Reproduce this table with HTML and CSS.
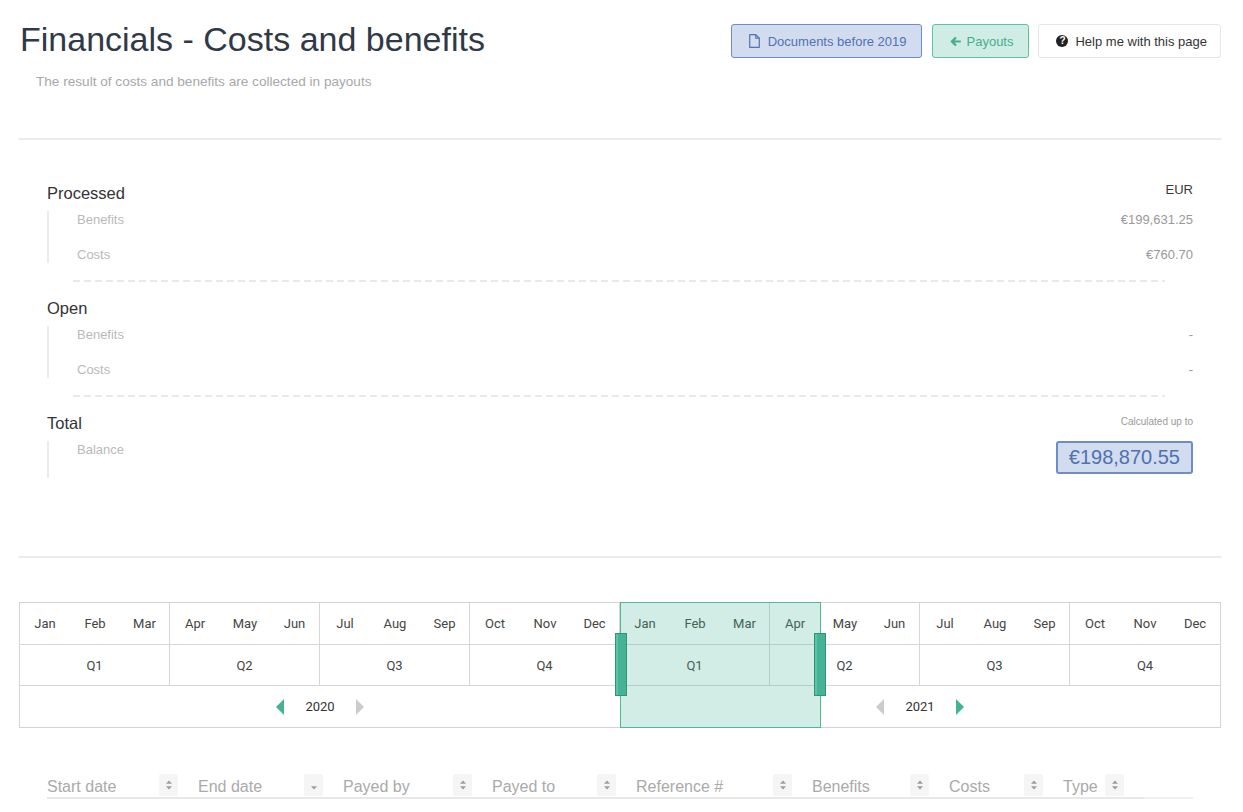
FILE: index.html
```html
<!DOCTYPE html>
<html lang="en">
<head>
<meta charset="utf-8">
<title>Financials - Costs and benefits</title>
<link rel="stylesheet" href="styles.css">
</head>
<body>
<div class="page">
  <header class="page-head">
    <div class="titles">
      <h1 class="title">Financials - Costs and benefits</h1>
      <p class="subtitle">The result of costs and benefits are collected in payouts</p>
    </div>
    <div class="actions">
      <button class="btn btn-blue">
        <svg class="ico" width="11" height="14" viewBox="0 0 11 14"><path d="M0.7 0.7 H6.8 L10.3 4.2 V13.3 H0.7 Z" fill="none" stroke="currentColor" stroke-width="1.2" stroke-linejoin="round"/><path d="M6.8 0.7 V4.2 H10.3" fill="none" stroke="currentColor" stroke-width="1.2" stroke-linejoin="round"/></svg>
        <span>Documents before 2019</span>
      </button>
      <button class="btn btn-teal">
        <svg class="ico" width="11" height="11" viewBox="0 0 12 12"><path d="M0.3 6 L5.6 0.7 L7.4 2.5 L5 4.8 H11.8 V7.2 H5 L7.4 9.5 L5.6 11.3 Z" fill="currentColor"/></svg>
        <span>Payouts</span>
      </button>
      <button class="btn btn-plain">
        <span class="qicon">?</span>
        <span>Help me with this page</span>
      </button>
    </div>
  </header>

  <hr class="rule">

  <section class="summary">
    <div class="group">
      <div class="group-head"><span class="group-title">Processed</span><span class="currency">EUR</span></div>
      <div class="items">
        <div class="item"><span class="item-label">Benefits</span><span class="item-value">€199,631.25</span></div>
        <div class="item"><span class="item-label">Costs</span><span class="item-value">€760.70</span></div>
      </div>
    </div>
    <div class="dash"></div>
    <div class="group">
      <div class="group-head"><span class="group-title">Open</span></div>
      <div class="items">
        <div class="item"><span class="item-label">Benefits</span><span class="item-value">-</span></div>
        <div class="item"><span class="item-label">Costs</span><span class="item-value">-</span></div>
      </div>
    </div>
    <div class="dash"></div>
    <div class="group">
      <div class="group-head"><span class="group-title">Total</span><span class="calc">Calculated up to</span></div>
      <div class="items">
        <div class="item item-balance"><span class="item-label">Balance</span><span class="balance">€198,870.55</span></div>
      </div>
    </div>
  </section>

  <hr class="rule">

  <div class="timeline">
    <div class="m">Jan</div><div class="m">Feb</div><div class="m qe">Mar</div>
    <div class="m">Apr</div><div class="m">May</div><div class="m qe">Jun</div>
    <div class="m">Jul</div><div class="m">Aug</div><div class="m qe">Sep</div>
    <div class="m">Oct</div><div class="m">Nov</div><div class="m qe">Dec</div>
    <div class="m">Jan</div><div class="m">Feb</div><div class="m qe">Mar</div>
    <div class="m">Apr</div><div class="m">May</div><div class="m qe">Jun</div>
    <div class="m">Jul</div><div class="m">Aug</div><div class="m qe">Sep</div>
    <div class="m">Oct</div><div class="m">Nov</div><div class="m">Dec</div>

    <div class="q">Q1</div><div class="q">Q2</div><div class="q">Q3</div><div class="q">Q4</div>
    <div class="q">Q1</div><div class="q">Q2</div><div class="q">Q3</div><div class="q q-last">Q4</div>

    <div class="y">
      <div class="ynav">
        <svg class="tri" width="8" height="16" viewBox="0 0 8 16"><path d="M8 0 V16 L0 8 Z" fill="#44b394"/></svg>
        <span>2020</span>
        <svg class="tri" width="8" height="16" viewBox="0 0 8 16"><path d="M0 0 V16 L8 8 Z" fill="#cccccc"/></svg>
      </div>
    </div>
    <div class="y">
      <div class="ynav">
        <svg class="tri" width="8" height="16" viewBox="0 0 8 16"><path d="M8 0 V16 L0 8 Z" fill="#cccccc"/></svg>
        <span>2021</span>
        <svg class="tri" width="8" height="16" viewBox="0 0 8 16"><path d="M0 0 V16 L8 8 Z" fill="#44b394"/></svg>
      </div>
    </div>

    <div class="sel">
      <span class="handle handle-l"></span>
      <span class="handle handle-r"></span>
    </div>
  </div>

  <div class="table">
    <div class="thead">
      <div class="th"><span class="th-label">Start date</span><span class="sort"><svg width="8" height="12" viewBox="0 0 8 12"><path d="M4 1.5 L7 4.8 H1 Z M4 10.5 L7 7.2 H1 Z" fill="#9c9c9c"/></svg></span></div>
      <div class="th"><span class="th-label">End date</span><span class="sort"><svg width="8" height="12" viewBox="0 0 8 12"><path d="M4 10.5 L7 7.2 H1 Z" fill="#9c9c9c"/></svg></span></div>
      <div class="th"><span class="th-label">Payed by</span><span class="sort"><svg width="8" height="12" viewBox="0 0 8 12"><path d="M4 1.5 L7 4.8 H1 Z M4 10.5 L7 7.2 H1 Z" fill="#9c9c9c"/></svg></span></div>
      <div class="th"><span class="th-label">Payed to</span><span class="sort"><svg width="8" height="12" viewBox="0 0 8 12"><path d="M4 1.5 L7 4.8 H1 Z M4 10.5 L7 7.2 H1 Z" fill="#9c9c9c"/></svg></span></div>
      <div class="th"><span class="th-label">Reference #</span><span class="sort"><svg width="8" height="12" viewBox="0 0 8 12"><path d="M4 1.5 L7 4.8 H1 Z M4 10.5 L7 7.2 H1 Z" fill="#9c9c9c"/></svg></span></div>
      <div class="th"><span class="th-label">Benefits</span><span class="sort"><svg width="8" height="12" viewBox="0 0 8 12"><path d="M4 1.5 L7 4.8 H1 Z M4 10.5 L7 7.2 H1 Z" fill="#9c9c9c"/></svg></span></div>
      <div class="th"><span class="th-label">Costs</span><span class="sort"><svg width="8" height="12" viewBox="0 0 8 12"><path d="M4 1.5 L7 4.8 H1 Z M4 10.5 L7 7.2 H1 Z" fill="#9c9c9c"/></svg></span></div>
      <div class="th"><span class="th-label">Type</span><span class="sort"><svg width="8" height="12" viewBox="0 0 8 12"><path d="M4 1.5 L7 4.8 H1 Z M4 10.5 L7 7.2 H1 Z" fill="#9c9c9c"/></svg></span></div>
    </div>
  </div>
</div>
</body>
</html>
```

FILE: styles.css
```css
* { box-sizing: border-box; }

html, body {
  margin: 0;
  background: #ffffff;
}

body {
  font-family: "Liberation Sans", Arial, sans-serif;
  color: #333333;
  overflow: hidden;
}

.page {
  padding: 0 22px 0 19px;
}

/* ---------- header ---------- */
.page-head {
  display: flex;
  justify-content: space-between;
  align-items: flex-start;
}

.title {
  margin: 19px 0 0 1px;
  font-size: 34px;
  line-height: 40px;
  font-weight: normal;
  color: #2f3947;
}

.subtitle {
  margin: 13px 0 0 17px;
  font-size: 13.6px;
  line-height: 20px;
  color: #a8a8a8;
}

.actions {
  display: flex;
  gap: 9px;
  margin-top: 24px;
}

.btn {
  display: inline-flex;
  align-items: center;
  gap: 7px;
  height: 34px;
  padding: 0 13px 0 17px;
  border: 1px solid;
  border-radius: 3px;
  font-family: "Liberation Sans", Arial, sans-serif;
  font-size: 13px;
  cursor: pointer;
}

.btn-blue {
  background: #d1dcee;
  border-color: #6f8cc9;
  color: #5272b4;
  gap: 8px;
  padding-right: 14px;
  margin-right: 1px;
}

.btn-teal {
  background: #d0ede5;
  border-color: #5cc2a2;
  color: #45ae8a;
  gap: 6px;
  padding-right: 15px;
}

.btn-plain {
  background: #ffffff;
  border-color: #e6e6e6;
  color: #333333;
}

.ico { display: block; }

.qicon {
  width: 12px;
  height: 12px;
  border-radius: 50%;
  background: #222222;
  color: #ffffff;
  font-size: 10px;
  line-height: 12px;
  font-weight: bold;
  text-align: center;
}

/* ---------- rules ---------- */
.rule {
  border: 0;
  height: 2px;
  margin: 0;
  background: #ececec;
}

.page-head + .rule {
  margin-top: 46px;
}

/* ---------- summary ---------- */
.summary {
  padding: 43px 28px 78px;
}

.group-head {
  display: flex;
  justify-content: space-between;
  align-items: flex-start;
  height: 20px;
}

.group-title {
  font-size: 16.5px;
  line-height: 20px;
  color: #333333;
}

.currency {
  font-size: 13px;
  line-height: 14px;
  color: #3a3a3a;
}

.calc {
  margin-top: 3px;
  font-size: 10px;
  line-height: 12px;
  color: #9a9a9a;
}

.items {
  margin-top: 8px;
  border-left: 2px solid #ececec;
  padding-left: 28px;
  display: flex;
  flex-direction: column;
  gap: 18px;
}

.item {
  display: flex;
  justify-content: space-between;
  align-items: flex-start;
  font-size: 13px;
  line-height: 17px;
}

.item-label { color: #b9b9b9; }
.item-value { color: #999999; }

.item-balance { padding-bottom: 4px; }

.balance {
  height: 33px;
  padding: 0 11px;
  border: 2px solid #6f8cc9;
  border-radius: 3px;
  background: #d1dcee;
  color: #4f70b4;
  font-size: 20px;
  line-height: 29px;
}

.dash {
  height: 2px;
  margin: 17px 28px 16px 26px;
  background: repeating-linear-gradient(to right, #e9e9e9 0 7px, transparent 7px 11px);
}

/* ---------- timeline ---------- */
.rule + .timeline { margin-top: 44px; }

.timeline {
  position: relative;
  display: grid;
  grid-template-columns: repeat(24, 1fr);
  grid-template-rows: 42px 41px 41px;
  border: 1px solid #d3d3d3;
  font-family: Roboto, "Liberation Sans", Arial, sans-serif;
  font-size: 13px;
  color: #444444;
}

.m {
  display: flex;
  align-items: center;
  justify-content: center;
  border-bottom: 1px solid #d6d6d6;
}

.m.qe { border-right: 1px solid #d6d6d6; }

.q {
  grid-column: span 3;
  display: flex;
  align-items: center;
  justify-content: center;
  border-bottom: 1px solid #d6d6d6;
  border-right: 1px solid #d6d6d6;
}

.q.q-last { border-right: 0; }

.y {
  grid-column: span 12;
  display: flex;
  align-items: center;
  justify-content: center;
}

.ynav {
  display: flex;
  align-items: center;
  gap: 21px;
  color: #333333;
  font-size: 13px;
}

.tri { display: block; }

.sel {
  position: absolute;
  left: 600px;
  top: -1px;
  bottom: -1px;
  width: 201px;
  background: rgba(72, 182, 150, 0.25);
  border: 1px solid #50b798;
}

.handle {
  position: absolute;
  top: 30px;
  width: 12px;
  height: 63px;
  background: #46b396;
  border: 1px solid #2f9476;
  box-shadow: inset 2px 0 0 #5cc3a6;
}

.handle-l { left: -6px; }
.handle-r { right: -6px; }

/* ---------- table header ---------- */
.table {
  margin: 45px 28px 0;
  border-bottom: 2px solid #f0f0f0;
}

.thead {
  display: grid;
  grid-template-columns: 151px 145px 149px 144px 176px 137px 114px 81px;
  width: max-content;
  border-bottom: 3px solid #e8e8e8;
  margin-bottom: -3px;
}

.th {
  display: flex;
  align-items: center;
  justify-content: space-between;
  height: 24px;
  padding-right: 20px;
  font-size: 16px;
  color: #aaaaaa;
}

.th-label {
  padding-top: 3px;
}

.sort {
  display: flex;
  align-items: center;
  justify-content: center;
  width: 19px;
  height: 22px;
  border-radius: 2px;
  background: #f5f5f5;
}
```
